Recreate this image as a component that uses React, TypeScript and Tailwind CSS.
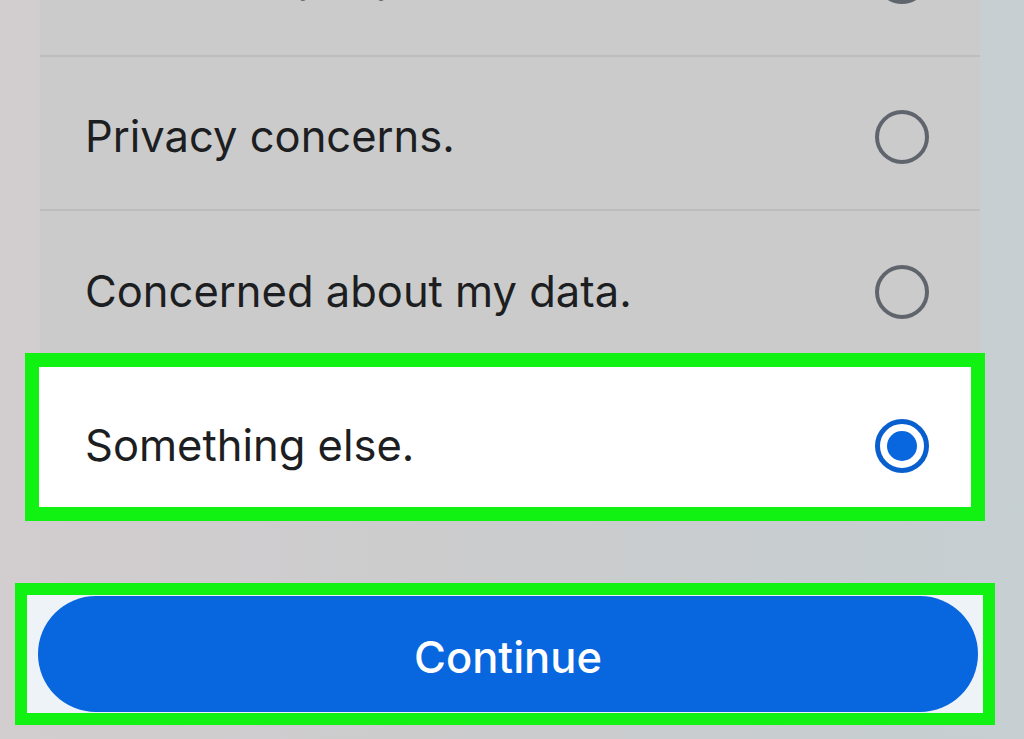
const reasons = [
  "Can't find people to follow.",
  'Privacy concerns.',
  'Concerned about my data.',
];

const Radio = ({ checked }: { checked?: boolean }) =>
  checked ? (
    <div className="w-[54px] h-[54px] rounded-full border-[5px] border-[#0a5fcf] bg-white flex items-center justify-center">
      <div className="w-[30px] h-[30px] rounded-full bg-[#0866df]" />
    </div>
  ) : (
    <div className="w-[54px] h-[54px] rounded-full border-[4px] border-[#60656d]" />
  );

export default function App() {
  return (
    <div
      className="w-[1024px] h-[739px] overflow-hidden bg-gradient-to-r from-[#d2cdcf] via-[#cbcccd] to-[#c6cfd2] text-[#1c1e21]"
      style={{ fontFamily: 'Inter, "Noto Sans", sans-serif' }}
    >
      {/* reason list, first row scrolled mostly out of view */}
      <div className="ml-[40px] w-[940px] -mt-[97px] bg-[#cbcbcb]">
        {reasons.map((r, i) => (
          <div
            key={r}
            className={`flex items-center justify-between pl-[45px] pr-[51px] h-[154px] ${
              i < 2 ? 'border-b-2 border-[#bdbdbd]' : ''
            } ${i === 0 ? 'pb-[4px]' : 'pt-[8px]'}`}
          >
            <span className="text-[43.5px] leading-none">{r}</span>
            <Radio />
          </div>
        ))}
      </div>

      {/* selected option */}
      <div className="-mt-[12px] relative ml-[25px] w-[960px] h-[168px] border-[14px] border-[#12f212] bg-white flex items-center justify-between pl-[46px] pr-[42px] pt-[18px]">
        <span className="text-[43.5px] leading-none">Something else.</span>
        <Radio checked />
      </div>

      {/* continue */}
      <div className="mt-[62px] ml-[15px] w-[980px] h-[142px] border-[12px] border-[#12f212] bg-[#eef3f7] pl-[11px] pr-[5px] py-[1px]">
        <button className="w-full h-full rounded-full bg-[#0866df] text-white text-[43.5px] font-medium flex items-center justify-center pt-[8px]">
          Continue
        </button>
      </div>
    </div>
  );
}
